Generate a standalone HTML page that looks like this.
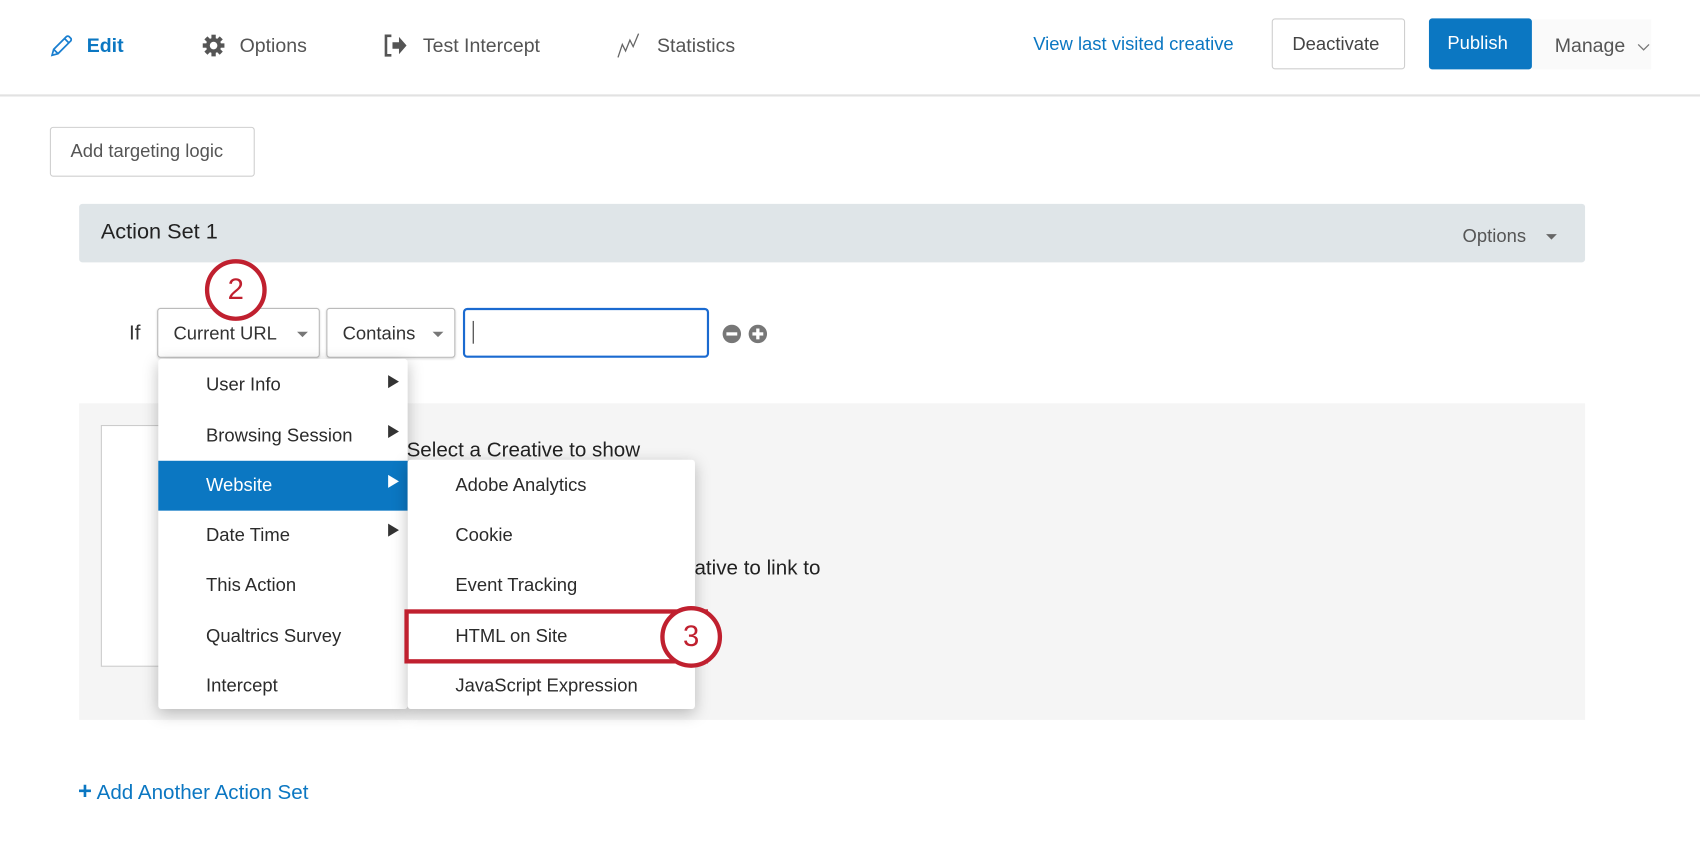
<!DOCTYPE html>
<html><head><meta charset="utf-8"><style>
*{margin:0;padding:0;box-sizing:border-box}
html,body{width:1700px;height:850px;overflow:hidden;background:#fff}
#w{position:absolute;left:0;top:0;width:1568px;height:784px;transform:scale(1.08418);transform-origin:0 0;font-family:"Liberation Sans",sans-serif;color:#2b2b2b}
.a{position:absolute;white-space:nowrap}
.nav{font-size:18px;color:#545454;top:32px}
.btn{position:absolute;border:1px solid #cfcfcf;border-radius:3px;background:#fff}
.mi{position:absolute;left:44px;font-size:17px;color:#2b2b2b}
.arr{position:absolute;left:212px;width:0;height:0;border-top:6px solid transparent;border-bottom:6px solid transparent;border-left:10px solid #333}
</style></head><body><div id="w">
<svg class="a" style="left:45px;top:30px" width="24" height="24" viewBox="0 0 24 24"><path d="M3 21l1.5-5.5L16 4a2 2 0 0 1 3 0l1 1a2 2 0 0 1 0 3L8.5 19.5z M14.5 5.5l4 4 M4.5 15.5l4 4" fill="none" stroke="#1a7fd0" stroke-width="1.6"/></svg>
<div class="a nav" style="left:80px;color:#0b77c2;font-weight:bold">Edit</div>
<svg class="a" style="left:186px;top:31px" width="22" height="22" viewBox="0 0 22 22"><g fill="#555"><circle cx="11" cy="11" r="7"/><rect x="9" y="1" width="4" height="20"/><rect x="1" y="9" width="20" height="4"/><rect x="9" y="1" width="4" height="20" transform="rotate(45 11 11)"/><rect x="9" y="1" width="4" height="20" transform="rotate(-45 11 11)"/></g><circle cx="11" cy="11" r="3.5" fill="#fff"/></svg>
<div class="a nav" style="left:221px">Options</div>
<svg class="a" style="left:353px;top:30px" width="24" height="24" viewBox="0 0 24 24"><path d="M8 3H3v18h5" fill="none" stroke="#555" stroke-width="2.4"/><path d="M9 9h6V4l7 8-7 8v-5H9z" fill="#555"/></svg>
<div class="a nav" style="left:390px">Test Intercept</div>
<svg class="a" style="left:569px;top:30px" width="24" height="24" viewBox="0 0 24 24"><path d="M1 23L5 11l3 6 4-10 3 6 5-12" fill="none" stroke="#666" stroke-width="1.2"/></svg>
<div class="a nav" style="left:606px">Statistics</div>
<div class="a" style="left:953px;top:31px;font-size:17px;color:#0b77c2">View last visited creative</div>
<div class="btn" style="left:1173px;top:17px;width:123px;height:47px"></div>
<div class="a" style="left:1192px;top:31px;font-size:17px;color:#444">Deactivate</div>
<div class="a" style="left:1318px;top:17px;width:95px;height:47px;background:#0b77c2;border-radius:3px"></div>
<div class="a" style="left:1335px;top:30px;font-size:17px;color:#fff">Publish</div>
<div class="a" style="left:1413px;top:18px;width:110px;height:46px;background:#fafafa"></div>
<div class="a" style="left:1434px;top:32px;font-size:18px;color:#555">Manage</div>
<svg class="a" style="left:1510px;top:40px" width="12" height="8" viewBox="0 0 12 8"><path d="M1 1l5 5 5-5" fill="none" stroke="#777" stroke-width="1.2"/></svg>
<div class="a" style="left:0;top:87px;width:1568px;height:2px;background:#e2e2e2"></div>
<div class="btn" style="left:46px;top:117px;width:189px;height:46px"></div>
<div class="a" style="left:65px;top:130px;font-size:17px;color:#555">Add targeting logic</div>
<div class="a" style="left:73px;top:188px;width:1389px;height:54px;background:#dfe5e8;border-radius:3px"></div>
<div class="a" style="left:93px;top:203px;font-size:20px;color:#222">Action Set 1</div>
<div class="a" style="left:1349px;top:208px;font-size:17px;color:#555">Options</div>
<div class="a" style="left:1426px;top:216px;border-left:5px solid transparent;border-right:5px solid transparent;border-top:5px solid #666"></div>
<div class="a" style="left:119px;top:297px;font-size:19px;color:#333">If</div>
<div class="btn" style="left:145px;top:284px;width:150px;height:46px;border-color:#bbb;box-shadow:0 1px 2px rgba(0,0,0,.15)"></div>
<div class="a" style="left:160px;top:298px;font-size:17px;color:#333">Current URL</div>
<div class="a" style="left:274px;top:306px;border-left:5px solid transparent;border-right:5px solid transparent;border-top:5px solid #777"></div>
<div class="btn" style="left:301px;top:284px;width:119px;height:46px;border-color:#bbb;box-shadow:0 1px 2px rgba(0,0,0,.15)"></div>
<div class="a" style="left:316px;top:298px;font-size:17px;color:#333">Contains</div>
<div class="a" style="left:399px;top:306px;border-left:5px solid transparent;border-right:5px solid transparent;border-top:5px solid #777"></div>
<div class="a" style="left:427px;top:284px;width:227px;height:46px;border:2px solid #1a6ad0;border-radius:4px"></div>
<div class="a" style="left:436px;top:296px;width:1px;height:21px;background:#333"></div>
<svg class="a" style="left:666px;top:299px" width="44" height="18" viewBox="0 0 44 18"><circle cx="9" cy="9" r="8.5" fill="#777"/><rect x="4" y="7.5" width="10" height="3" fill="#fff"/><circle cx="33" cy="9" r="8.5" fill="#777"/><rect x="28" y="7.5" width="10" height="3" fill="#fff"/><rect x="31.5" y="4" width="3" height="10" fill="#fff"/></svg>
<div class="a" style="left:73px;top:372px;width:1389px;height:292px;background:#f5f5f5"></div>
<div class="a" style="left:93px;top:392px;width:120px;height:223px;background:#fff;border:1px solid #ccc"></div>
<div class="a" style="left:375px;top:405px;font-size:19px;color:#222">Select a Creative to show</div>
<div class="a" style="left:536px;top:514px;font-size:19px;color:#222">Select a Creative to link to</div>
<div class="a" style="left:146px;top:331px;width:230px;height:323px;background:#fff;border-radius:3px;box-shadow:0 4px 14px rgba(0,0,0,.25)">
<div class="mi" style="top:14px">User Info</div><div class="arr" style="top:15px"></div>
<div class="mi" style="top:61px">Browsing Session</div><div class="arr" style="top:61px"></div>
<div class="a" style="left:0;top:94px;width:230px;height:46px;background:#0b77c2"></div>
<div class="mi" style="top:107px;color:#fff">Website</div><div class="arr" style="top:107px;border-left-color:#fff"></div>
<div class="mi" style="top:153px">Date Time</div><div class="arr" style="top:152px"></div>
<div class="mi" style="top:199px">This Action</div>
<div class="mi" style="top:246px">Qualtrics Survey</div>
<div class="mi" style="top:292px">Intercept</div>
</div>
<div class="a" style="left:376px;top:424px;width:265px;height:230px;background:#fff;border-radius:3px;box-shadow:0 4px 14px rgba(0,0,0,.25)">
<div class="mi" style="top:14px">Adobe Analytics</div>
<div class="mi" style="top:60px">Cookie</div>
<div class="mi" style="top:106px">Event Tracking</div>
<div class="mi" style="top:153px">HTML on Site</div>
<div class="mi" style="top:199px">JavaScript Expression</div>
</div>
<div class="a" style="left:373px;top:562px;width:280px;height:50px;border:4px solid #c0202f"></div>
<div class="a" style="left:609px;top:559px;width:57px;height:57px;border:4px solid #c0202f;border-radius:50%;background:#fff;text-align:center;font-size:27px;line-height:48px;color:#c0202f">3</div>
<div class="a" style="left:189px;top:239px;width:57px;height:57px;border:4px solid #c0202f;border-radius:50%;background:#fff;text-align:center;font-size:27px;line-height:48px;color:#c0202f">2</div>
<div class="a" style="left:72px;top:717px;font-size:19px;color:#0b77c2"><span style="font-size:22px;font-weight:bold">+</span> Add Another Action Set</div>
</div></body></html>
